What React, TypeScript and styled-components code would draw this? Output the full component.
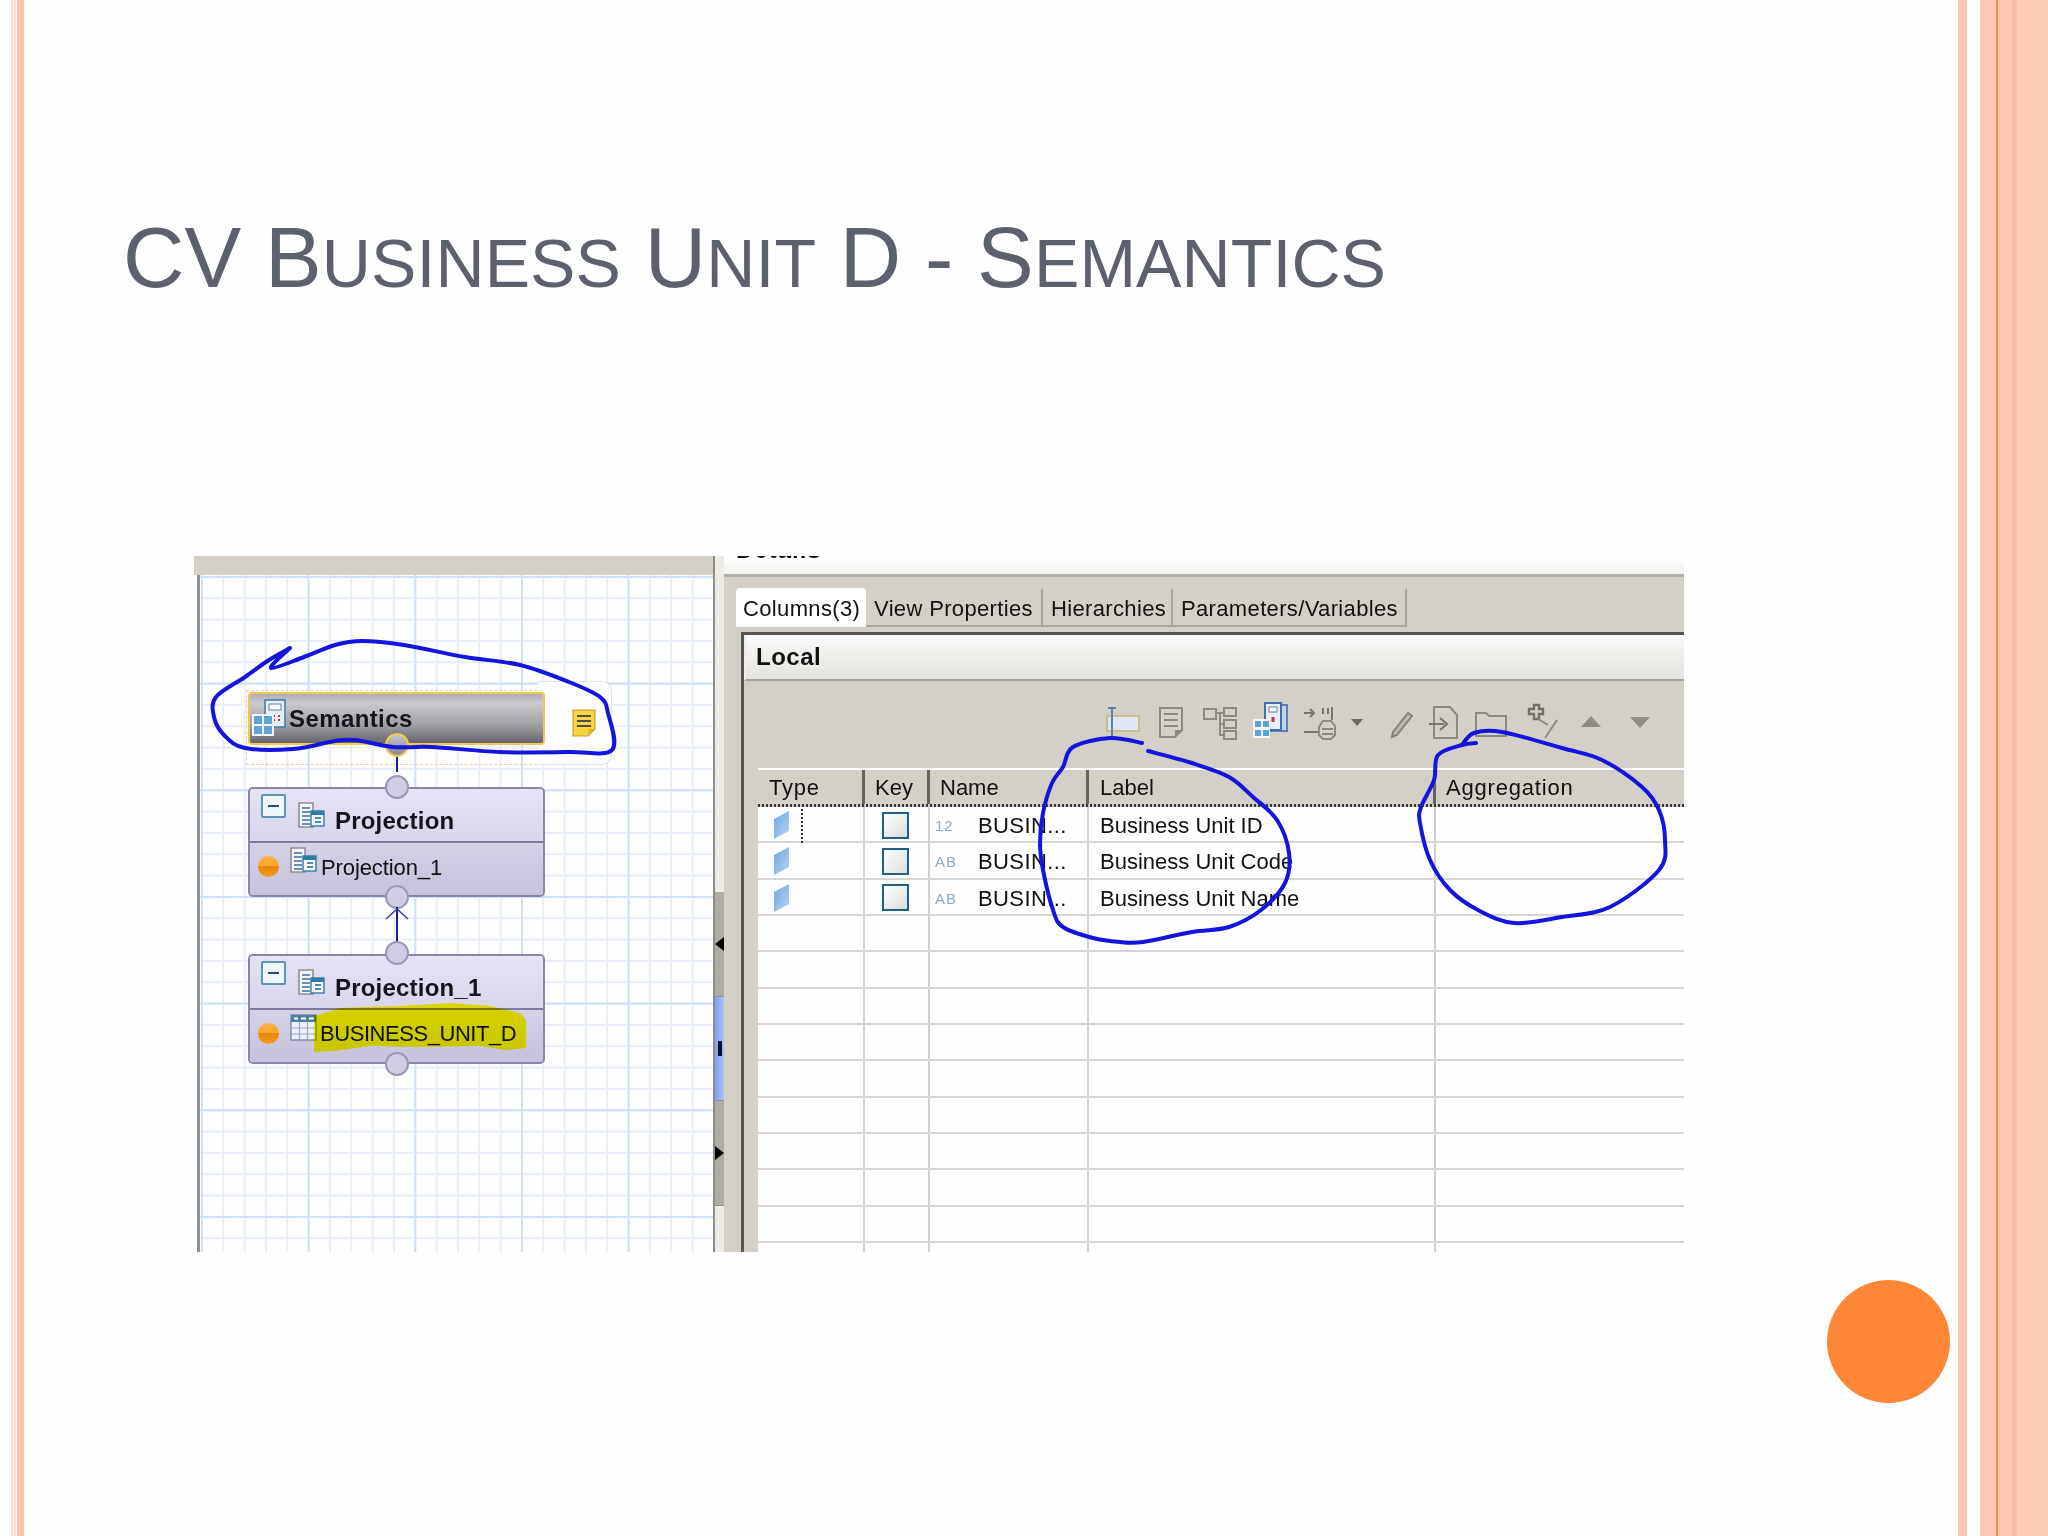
import React from 'react';
import styled, { createGlobalStyle } from 'styled-components';

const GlobalStyle = createGlobalStyle`
  html, body {
    margin: 0;
    padding: 0;
    background: #fefefe;
  }
  * {
    box-sizing: border-box;
  }
`;

const smoothPath = (pts: number[][]) => {
  let d = `M${pts[0][0]} ${pts[0][1]}`;
  for (let i = 0; i < pts.length - 1; i++) {
    const p0 = pts[Math.max(i - 1, 0)];
    const p1 = pts[i];
    const p2 = pts[i + 1];
    const p3 = pts[Math.min(i + 2, pts.length - 1)];
    const c1 = [p1[0] + (p2[0] - p0[0]) / 6, p1[1] + (p2[1] - p0[1]) / 6];
    const c2 = [p2[0] - (p3[0] - p1[0]) / 6, p2[1] - (p3[1] - p1[1]) / 6];
    d += ` C${c1[0].toFixed(1)} ${c1[1].toFixed(1)} ${c2[0].toFixed(1)} ${c2[1].toFixed(1)} ${p2[0]} ${p2[1]}`;
  }
  return d;
};

const semanticsInk = [
  [290, 648], [271, 668], [304, 657], [335, 645], [362, 641], [404, 645], [465, 657], [520, 665], [569, 682],
  [600, 697], [608, 713], [612, 750], [569, 752], [500, 752], [431, 747], [393, 747], [355, 740], [335, 741],
  [293, 749], [245, 748], [224, 735], [214, 717], [216, 697], [245, 677], [269, 660], [290, 648],
];
const labelInkA = [
  [1142, 743], [1110, 738], [1073, 747], [1063, 767], [1052, 783], [1043, 813], [1040, 843], [1043, 870],
  [1053, 910], [1063, 927], [1093, 938], [1120, 942], [1143, 942], [1192, 932], [1229, 927], [1261, 910],
  [1285, 883], [1289, 853], [1277, 820], [1253, 797], [1229, 777], [1192, 763], [1148, 751],
];
const aggregationInk = [
  [1476, 743], [1462, 745], [1438, 755], [1434, 780], [1421, 807], [1420, 823], [1430, 860], [1450, 890],
  [1478, 910], [1514, 923], [1562, 917], [1610, 907], [1659, 870], [1665, 840], [1659, 810], [1642, 787],
  [1602, 760], [1562, 748], [1502, 732], [1474, 733], [1462, 745],
];
const highlight =
  'M314 1016 L340 1008 L400 1006 L450 1003 L490 1006 L520 1013 L526 1020 L526 1048 L505 1050 L480 1046 L420 1047 L370 1046 L335 1051 L314 1052 Z';

const columns = '107px 65px 159px 347px 249px';
const rowsData = [
  { kind: '12', name: 'BUSIN...', label: 'Business Unit ID', focused: true },
  { kind: 'AB', name: 'BUSIN...', label: 'Business Unit Code', focused: false },
  { kind: 'AB', name: 'BUSIN...', label: 'Business Unit Name', focused: false },
];
const emptyRows = Array.from({ length: 10 }, (_, i) => i);

const Page = styled.div`
  width: 2048px;
  height: 1536px;
  display: flex;
  overflow: hidden;
  background: #fefefe;
`;

const Stripes = styled.div`
  display: flex;
  flex: none;
  height: 100%;
`;

const Stripe = styled.div<{ $w: number; $color?: string }>`
  width: ${(p) => p.$w}px;
  background: ${(p) => p.$color || 'transparent'};
`;

const Slide = styled.main`
  flex: 1;
  display: flex;
  flex-direction: column;
`;

const Title = styled.h1`
  margin: 208px 0 0 99px;
  font-family: 'Liberation Sans', Arial, sans-serif;
  font-size: 85px;
  font-weight: 400;
  line-height: 100px;
  letter-spacing: 0.1px;
  color: #5d616e;
  white-space: nowrap;
`;

const Low = styled.span`
  font-size: 68px;
  text-transform: uppercase;
`;

const Shot = styled.section`
  position: relative;
  margin: 243px 0 0 170px;
  width: 1490px;
  height: 696px;
  display: flex;
  overflow: hidden;
  font-family: 'Liberation Sans', Arial, sans-serif;
  font-size: 22px;
  color: #111;
  filter: blur(0.45px);
`;

const LeftPane = styled.div`
  width: 519px;
  display: flex;
  flex-direction: column;
`;

const TopBar = styled.div`
  height: 19px;
  background: #d4d0c8;
  flex: none;
`;

const CanvasWrap = styled.div`
  flex: 1;
  display: flex;
  padding-left: 3px;
  background: #fefefe;
`;

const Canvas = styled.div`
  position: relative;
  flex: 1;
  border-left: 3px solid #8f8f8f;
  background-color: #fefefe;
  background-image:
    linear-gradient(to right, #cde2f6 2px, transparent 2px),
    linear-gradient(to bottom, #cde2f6 2px, transparent 2px),
    linear-gradient(to right, #e8eefb 2px, transparent 2px),
    linear-gradient(to bottom, #e8eefb 2px, transparent 2px);
  background-size: 106.67px 106.67px, 106.67px 106.67px, 21.33px 21.33px, 21.33px 21.33px;
  background-position: 1px 0, 0 1px, 1px 0, 0 1px;
`;

const SelectionBox = styled.div`
  position: absolute;
  left: 46px;
  top: 115px;
  width: 301px;
  height: 75px;
  border: 1px dashed #f3cfa0;
`;

const SemanticsNode = styled.div`
  position: absolute;
  left: 48px;
  top: 117px;
  width: 297px;
  height: 53px;
  display: flex;
  align-items: center;
  border: 2px solid #f1c94e;
  border-radius: 4px;
  background: linear-gradient(#aeadb6 0%, #c9c9cf 18%, #a3a3aa 60%, #66666c 100%);
  font-weight: 700;
  font-size: 24px;
  letter-spacing: 0.4px;
  color: #14141c;
`;

const SemanticsGlyph = styled.svg`
  width: 36px;
  height: 38px;
  margin: 0 2px 2px 1px;
  flex: none;
`;

const NoteTab = styled.div`
  position: absolute;
  left: 338px;
  top: 106px;
  width: 74px;
  height: 84px;
  display: flex;
  align-items: center;
  justify-content: center;
  padding-left: 18px;
  border: 1px solid #dfe3ea;
  border-left: none;
  border-radius: 0 10px 10px 0;
  background: #fdfdfe;
`;

const Node = styled.div<{ $top: number }>`
  position: absolute;
  left: 48px;
  top: ${(p) => p.$top}px;
  width: 297px;
  height: 110px;
  border: 2px solid #8b83a9;
  border-radius: 5px;
  display: flex;
  flex-direction: column;
  overflow: hidden;
`;

const NodeHead = styled.div`
  height: 54px;
  flex: none;
  display: flex;
  align-items: flex-start;
  padding: 5px 0 0 11px;
  background: linear-gradient(#e7e3f5, #d9d5eb);
  border-bottom: 2px solid #7f78a0;
  font-weight: 700;
  font-size: 24px;
  letter-spacing: 0.2px;
  color: #14141c;
`;

const NodeTitle = styled.span`
  margin: 14px 0 0 10px;
  line-height: 26px;
`;

const Collapse = styled.span`
  width: 25px;
  height: 24px;
  flex: none;
  display: flex;
  align-items: center;
  justify-content: center;
  border: 2px solid #5d95b8;
  border-radius: 2px;
  background: #f1f6fb;
  margin-right: 12px;
  &::after {
    content: '';
    width: 11px;
    height: 2px;
    background: #24506e;
  }
`;

const NodeBody = styled.div`
  flex: 1;
  display: flex;
  align-items: flex-start;
  padding-left: 8px;
  background: linear-gradient(#d5d1e7, #c6c2dc);
`;

const StatusDot = styled.span`
  width: 21px;
  height: 21px;
  margin-top: 13px;
  border-radius: 50%;
  flex: none;
  background: linear-gradient(#fbb040 0%, #fba62c 46%, #e8860f 50%, #fb9a1e 100%);
`;

const NodeLabel = styled.span<{ $tight?: boolean }>`
  margin: ${(p) => (p.$tight ? 11 : 12)}px 0 0 ${(p) => (p.$tight ? 3 : 4)}px;
  line-height: 26px;
  letter-spacing: ${(p) => (p.$tight ? -0.45 : -0.1)}px;
  white-space: nowrap;
`;

const NodeGlyph = styled.svg<{ $ml: number; $mt: number }>`
  width: 27px;
  height: 27px;
  flex: none;
  margin-left: ${(p) => p.$ml}px;
  margin-top: ${(p) => p.$mt}px;
`;

const Port = styled.span<{ $y: number; $gold?: boolean }>`
  position: absolute;
  left: 185px;
  top: ${(p) => p.$y}px;
  width: 24px;
  height: 24px;
  border-radius: 50%;
  border: 2px solid ${(p) => (p.$gold ? '#f1c94e' : '#9c97b9')};
  background: ${(p) => (p.$gold ? 'linear-gradient(#c4c2cf, #88878f)' : '#d0cde4')};
`;

const Link = styled.span<{ $y: number; $h: number }>`
  position: absolute;
  left: 196px;
  top: ${(p) => p.$y}px;
  width: 2px;
  height: ${(p) => p.$h}px;
  background: #1c1c8c;
`;

const ArrowHead = styled.svg`
  position: absolute;
  left: 185px;
  top: 332px;
  width: 24px;
  height: 14px;
`;

const Sash = styled.div`
  width: 11px;
  flex: none;
  display: flex;
  flex-direction: column;
  border-left: 2px solid #8d8d8a;
  background: #ecebe6;
`;

const SashSpace = styled.div`
  flex: 1;
`;

const SashEnd = styled.div`
  height: 46px;
  flex: none;
`;

const SashPart = styled.div<{ $h: number; $blue?: boolean }>`
  height: ${(p) => p.$h}px;
  flex: none;
  display: flex;
  align-items: center;
  justify-content: center;
  border-bottom: 1px solid #8f8f8c;
  background: ${(p) => (p.$blue ? 'linear-gradient(to right, #7b9ff6, #adc3fb)' : '#afaba5')};
`;

const SashLeft = styled.span`
  border-style: solid;
  border-width: 7px 9px 7px 0;
  border-color: transparent #000 transparent transparent;
`;

const SashRight = styled.span`
  border-style: solid;
  border-width: 7px 0 7px 9px;
  border-color: transparent transparent transparent #000;
`;

const SashGrip = styled.span`
  width: 4px;
  height: 15px;
  background: #03102e;
`;

const RightPane = styled.div`
  flex: 1;
  display: flex;
  flex-direction: column;
  background: #d4d0c8;
  overflow: hidden;
`;

const DetailsBar = styled.div`
  height: 21px;
  flex: none;
  overflow: hidden;
  padding-left: 12px;
  border-bottom: 3px solid #b3b0a9;
  background: linear-gradient(#ffffff, #f1f0ed);
  font-weight: 700;
  font-size: 24px;
  letter-spacing: 1px;
`;

const DetailsText = styled.div`
  line-height: 26px;
  margin-top: -19px;
`;

const TabStrip = styled.div`
  display: flex;
  flex: none;
  height: 50px;
  padding: 11px 0 0 12px;
  letter-spacing: 0.35px;
`;

const Tab = styled.div<{ $w: number; $active?: boolean }>`
  width: ${(p) => p.$w}px;
  padding-left: ${(p) => (p.$active ? 7 : 8)}px;
  line-height: 37px;
  white-space: nowrap;
  border-right: 2px solid ${(p) => (p.$active ? '#ffffff' : '#a8a59f')};
  border-bottom: ${(p) => (p.$active ? 'none' : '2px solid #a8a59f')};
  border-top: 2px solid ${(p) => (p.$active ? '#fff' : 'transparent')};
  border-radius: ${(p) => (p.$active ? '4px 4px 0 0' : '0')};
  background: ${(p) => (p.$active ? '#ffffff' : 'transparent')};
`;

const Frame = styled.div`
  flex: 1;
  margin: 5px 0 0 17px;
  display: flex;
  flex-direction: column;
  min-height: 0;
  border-left: 3px solid #555;
  border-top: 3px solid #555;
`;

const FrameHead = styled.div`
  height: 46px;
  flex: none;
  padding-left: 10px;
  line-height: 44px;
  font-weight: 700;
  font-size: 24px;
  letter-spacing: 0.5px;
  border-bottom: 2px solid #a8a59f;
  border-left: 2px solid #eee;
  background: linear-gradient(#fbfbfa, #e4e2dd);
`;

const Toolbar = styled.div`
  height: 87px;
  flex: none;
  display: flex;
  align-items: center;
  padding: 0 0 5px 358px;
`;

const Tool = styled.svg<{ $gap?: number; $w?: number }>`
  width: ${(p) => p.$w || 40}px;
  height: 40px;
  flex: none;
  margin-left: ${(p) => p.$gap || 0}px;
`;

const TableWrap = styled.div`
  flex: 1;
  min-height: 0;
  margin-left: 14px;
  overflow: hidden;
  background: #fefefe;
`;

const HeadRow = styled.div`
  display: grid;
  grid-template-columns: ${columns};
  grid-template-rows: 34px;
  height: 36px;
  padding-top: 2px;
  background: #fff;
`;

const HeadCell = styled.div<{ $pl: number; $ls?: number; $last?: boolean }>`
  padding-left: ${(p) => p.$pl}px;
  height: 34px;
  line-height: 36px;
  letter-spacing: ${(p) => p.$ls || 0}px;
  background: #d4d0c8;
  border-right: ${(p) => (p.$last ? 'none' : '3px solid #65635e')};
`;

const DotLine = styled.div`
  height: 3px;
  background:
    repeating-linear-gradient(to right, #3a3a38 0 2px, #c9c6bf 2px 4px);
`;

const Row = styled.div`
  display: grid;
  grid-template-columns: ${columns};
  height: 36.33px;
  border-bottom: 2px solid #d8d6d2;
`;

const Cell = styled.div<{ $last?: boolean }>`
  position: relative;
  display: flex;
  align-items: center;
  white-space: nowrap;
  padding: 2px 0 0 11px;
  line-height: 34px;
  border-right: ${(p) => (p.$last ? 'none' : '2px solid #d2d0cc')};
`;

const FocusMark = styled.span`
  position: absolute;
  left: 43px;
  top: 2px;
  bottom: 0;
  border-left: 2px dotted #333;
`;

const TypeCell = styled(Cell)`
  padding: 0 0 0 16px;
`;

const KeyCell = styled(Cell)`
  padding: 0 0 0 17px;
`;

const CheckBox = styled.span`
  width: 27px;
  height: 27px;
  border: 2px solid #1f5f8b;
  background: linear-gradient(135deg, #ffffff, #dcdcdc);
`;

const NameCell = styled(Cell)`
  padding-left: 5px;
  letter-spacing: 0.4px;
`;

const Kind = styled.span`
  width: 43px;
  flex: none;
  font-size: 15px;
  letter-spacing: 1px;
  color: #8fa9bd;
`;

const Circle = styled.div`
  align-self: flex-end;
  width: 123px;
  height: 123px;
  margin: 28px 8px 0 0;
  border-radius: 50%;
  background: #fe8637;
`;

const Overlay = styled.svg`
  position: absolute;
  left: 0;
  top: 0;
  width: 1490px;
  height: 696px;
  pointer-events: none;
`;

const Marker = styled(Overlay)`
  mix-blend-mode: multiply;
`;

const ProjectionGlyph = ({ ml, mt }: { ml: number; mt: number }) => (
  <NodeGlyph $ml={ml} $mt={mt} viewBox="0 0 27 27">
    <path d="M1 1H15V25H1Z" fill="#f5f4f8" stroke="#8e8e90" strokeWidth="1.6" />
    <path d="M4 6H12M4 10H12M4 14H12M4 18H12M4 22H12" stroke="#3c6f94" strokeWidth="1.6" />
    <rect x="13" y="9" width="13" height="15" fill="#f4f8fb" stroke="#2f7ba8" strokeWidth="1.4" />
    <rect x="13" y="9" width="13" height="4" fill="#2f7ba8" />
    <path d="M17 16H23M17 20H23" stroke="#2f5f80" strokeWidth="1.6" />
  </NodeGlyph>
);

const TableGlyph = ({ ml, mt }: { ml: number; mt: number }) => (
  <NodeGlyph $ml={ml} $mt={mt} viewBox="0 0 27 27">
    <rect x="1" y="1" width="25" height="25" fill="#eef0fa" stroke="#7f8aa0" strokeWidth="1.4" />
    <rect x="1" y="1" width="25" height="7" fill="#4b7fa6" />
    <path d="M4 4.5H8M11 4.5H16M19 4.5H24" stroke="#fff" strokeWidth="2" />
    <path d="M9.5 8V26M17.5 8V26M1 14H26M1 20H26" stroke="#9aa6cf" strokeWidth="1.2" />
  </NodeGlyph>
);

const App = () => {
  return (
    <>
      <GlobalStyle />
      <Page>
        <Stripes>
          <Stripe $w={11} />
          <Stripe $w={2} $color="#fbd9cd" />
          <Stripe $w={1} />
          <Stripe $w={2} $color="#fcdcd0" />
          <Stripe $w={1} />
          <Stripe $w={7} $color="#fec3ae" />
        </Stripes>
        <Slide>
          <Title>
            CV B<Low>usiness</Low> U<Low>nit</Low> D - S<Low>emantics</Low>
          </Title>
          <Shot>
            <LeftPane>
              <TopBar />
              <CanvasWrap>
                <Canvas>
                  <SelectionBox />
                  <NoteTab>
                    <svg width="24" height="28" viewBox="0 0 24 28">
                      <path d="M1 1H23V20L16 27H1Z" fill="#f7d348" stroke="#c9a227" strokeWidth="1.2" />
                      <path d="M16 27V20H23Z" fill="#e2b52c" />
                      <path d="M5 7H19M5 12H19M5 17H19" stroke="#55514a" strokeWidth="2" />
                    </svg>
                  </NoteTab>
                  <SemanticsNode>
                    <SemanticsGlyph viewBox="0 0 36 38">
                      <rect x="14" y="1" width="20" height="27" fill="#e8eef5" stroke="#3f7fae" strokeWidth="1.6" />
                      <rect x="18" y="5" width="12" height="6" fill="#f5f8fb" stroke="#6f7f8f" />
                      <path d="M22 17h2M27 17h2M22 21h2M27 21h2" stroke="#c33" strokeWidth="2" />
                      <rect x="1" y="15" width="22" height="22" fill="#f3f6fa" />
                      <path d="M3 17H11V25H3ZM13 17H21V25H13ZM3 27H11V35H3ZM13 27H21V35H13Z" fill="#5ba3d8" />
                    </SemanticsGlyph>
                    Semantics
                  </SemanticsNode>
                  <Link $y={179} $h={18} />
                  <Port $y={158} $gold />
                  <Node $top={212}>
                    <NodeHead>
                      <Collapse />
                      <ProjectionGlyph ml={0} mt={8} />
                      <NodeTitle>Projection</NodeTitle>
                    </NodeHead>
                    <NodeBody>
                      <StatusDot />
                      <ProjectionGlyph ml={11} mt={4} />
                      <NodeLabel>Projection_1</NodeLabel>
                    </NodeBody>
                  </Node>
                  <Port $y={200} />
                  <Port $y={310} />
                  <Link $y={332} $h={36} />
                  <ArrowHead viewBox="0 0 24 14">
                    <path d="M1 12L12 2L23 12" fill="none" stroke="#3f3fa0" strokeWidth="1.6" />
                  </ArrowHead>
                  <Node $top={379}>
                    <NodeHead>
                      <Collapse />
                      <ProjectionGlyph ml={0} mt={8} />
                      <NodeTitle>Projection_1</NodeTitle>
                    </NodeHead>
                    <NodeBody>
                      <StatusDot />
                      <TableGlyph ml={11} mt={4} />
                      <NodeLabel $tight>BUSINESS_UNIT_D</NodeLabel>
                    </NodeBody>
                  </Node>
                  <Port $y={366} />
                  <Port $y={477} />
                </Canvas>
              </CanvasWrap>
            </LeftPane>
            <Sash>
              <SashSpace />
              <SashPart $h={105}>
                <SashLeft />
              </SashPart>
              <SashPart $h={104} $blue>
                <SashGrip />
              </SashPart>
              <SashPart $h={105}>
                <SashRight />
              </SashPart>
              <SashEnd />
            </Sash>
            <RightPane>
              <DetailsBar>
                <DetailsText>Details</DetailsText>
              </DetailsBar>
              <TabStrip>
                <Tab $w={130} $active>
                  Columns(3)
                </Tab>
                <Tab $w={177}>View Properties</Tab>
                <Tab $w={130}>Hierarchies</Tab>
                <Tab $w={234}>Parameters/Variables</Tab>
              </TabStrip>
              <Frame>
                <FrameHead>Local</FrameHead>
                <Toolbar>
                  <Tool viewBox="0 0 40 40">
                    <rect x="5" y="14" width="32" height="15" fill="#dfe6f5" stroke="#c9bf8a" strokeWidth="2" />
                    <path d="M10 6V36M6 6H14M6 36H14" fill="none" stroke="#5b85b0" strokeWidth="2" />
                  </Tool>
                  <Tool $gap={9} viewBox="0 0 40 40">
                    <path d="M9 6H31V28L24 35H9Z" fill="none" stroke="#8b8983" strokeWidth="2" />
                    <path d="M13 12H27M13 18H27M13 24H27" stroke="#8b8983" strokeWidth="2" />
                    <path d="M24 35V28H31Z" fill="#8b8983" />
                  </Tool>
                  <Tool $gap={9} viewBox="0 0 40 40">
                    <path d="M4 7H16V17H4ZM24 6H36V14H24ZM24 18H36V26H24ZM24 29H36V37H24Z" fill="none" stroke="#8b8983" strokeWidth="2" />
                    <path d="M16 11H24M20 11V33H24M20 22H24" fill="none" stroke="#8b8983" strokeWidth="2" />
                  </Tool>
                  <Tool $gap={10} viewBox="0 0 40 40">
                    <rect x="21" y="3" width="16" height="26" fill="#c6d3e6" stroke="#5a7fb5" strokeWidth="2" />
                    <rect x="15" y="1" width="16" height="27" fill="#e9eef7" stroke="#3f6fb5" strokeWidth="2" />
                    <rect x="19" y="5" width="8" height="5" fill="#fff" stroke="#6f7f8f" />
                    <path d="M23 15v5" stroke="#c33" strokeWidth="3" />
                    <rect x="3" y="17" width="17" height="19" fill="#f3f6fa" />
                    <path d="M5 19H11V25H5ZM13 19H19V25H13ZM5 28H11V34H5ZM13 28H19V34H13Z" fill="#5ba3d8" />
                  </Tool>
                  <Tool $gap={9} viewBox="0 0 40 40">
                    <path d="M5 11H15M11 7L15 11L11 15M5 30H19M24 6V12M29 6V12M33 5V18" fill="none" stroke="#77756f" strokeWidth="2" />
                    <path d="M24 19H32L36 24V33L32 37H24L20 33V25Z" fill="none" stroke="#8b8983" strokeWidth="2" />
                    <path d="M23 27H34M23 32H34" stroke="#8b8983" strokeWidth="2" />
                  </Tool>
                  <Tool $gap={10} $w={16} viewBox="0 0 16 40">
                    <path d="M2 17H14L8 24Z" fill="#6b6964" />
                  </Tool>
                  <Tool $gap={16} viewBox="0 0 40 40">
                    <path d="M12 30L27 11L31 14L16 33L11 35Z" fill="#b9b7b1" stroke="#85837d" strokeWidth="2" />
                  </Tool>
                  <Tool $gap={4} viewBox="0 0 40 40">
                    <path d="M9 5H25L32 13V36H9Z" fill="none" stroke="#8b8983" strokeWidth="2" />
                    <path d="M4 22H19M15 16L22 22L15 28" fill="none" stroke="#77756f" strokeWidth="2" />
                  </Tool>
                  <Tool $gap={6} viewBox="0 0 40 40">
                    <path d="M5 34V11H15L18 14H35V34Z" fill="none" stroke="#8b8983" strokeWidth="2" />
                  </Tool>
                  <Tool $gap={10} viewBox="0 0 40 40">
                    <path d="M8 7H13V3H18V7H22V12H18V17H13V12H8Z" fill="none" stroke="#74726c" strokeWidth="2.4" />
                    <path d="M17 17L27 23M24 36L36 18" fill="none" stroke="#8b8983" strokeWidth="2" />
                  </Tool>
                  <Tool $gap={10} viewBox="0 0 40 40">
                    <path d="M10 25L20 14L30 25Z" fill="#8f8d87" />
                  </Tool>
                  <Tool $gap={9} viewBox="0 0 40 40">
                    <path d="M10 15L30 15L20 26Z" fill="#8f8d87" />
                  </Tool>
                </Toolbar>
                <TableWrap>
                  <HeadRow>
                    <HeadCell $pl={11} $ls={0.8}>Type</HeadCell>
                    <HeadCell $pl={10}>Key</HeadCell>
                    <HeadCell $pl={10}>Name</HeadCell>
                    <HeadCell $pl={11}>Label</HeadCell>
                    <HeadCell $pl={10} $ls={0.8} $last>
                      Aggregation
                    </HeadCell>
                  </HeadRow>
                  <DotLine />
                  {rowsData.map((row, i) => (
                    <Row key={i}>
                      <TypeCell>
                        <svg width="16" height="28" viewBox="0 0 16 28">
                          <defs>
                            <linearGradient id={`para${i}`} x1="0" y1="0" x2="1" y2="1">
                              <stop offset="0" stopColor="#6aa5e0" />
                              <stop offset="1" stopColor="#b9d6f2" />
                            </linearGradient>
                          </defs>
                          <path d="M0 8L15 0V20L0 28Z" fill={`url(#para${i})`} />
                        </svg>
                        {row.focused && <FocusMark />}
                      </TypeCell>
                      <KeyCell>
                        <CheckBox />
                      </KeyCell>
                      <NameCell>
                        <Kind>{row.kind}</Kind>
                        {row.name}
                      </NameCell>
                      <Cell>{row.label}</Cell>
                      <Cell $last />
                    </Row>
                  ))}
                  {emptyRows.map((n) => (
                    <Row key={n}>
                      <Cell />
                      <Cell />
                      <Cell />
                      <Cell />
                      <Cell $last />
                    </Row>
                  ))}
                </TableWrap>
              </Frame>
            </RightPane>
            <Marker viewBox="194 556 1490 696">
              <path d={highlight} fill="#ffff00" />
            </Marker>
            <Overlay viewBox="194 556 1490 696">
              <g fill="none" stroke="#1414dc" strokeWidth="4" strokeLinecap="round" strokeLinejoin="round">
                <path d={smoothPath(semanticsInk)} />
                <path d={smoothPath(labelInkA)} />
                <path d={smoothPath(aggregationInk)} />
              </g>
            </Overlay>
          </Shot>
          <Circle />
        </Slide>
        <Stripes>
          <Stripe $w={9} $color="#fec6b3" />
          <Stripe $w={13} />
          <Stripe $w={16} $color="#fec6b3" />
          <Stripe $w={2} $color="#f98f4f" />
          <Stripe $w={14} $color="#fec6b3" />
          <Stripe $w={5} $color="#fbbca6" />
          <Stripe $w={31} $color="#fdcbb8" />
        </Stripes>
      </Page>
    </>
  );
};

export default App;
